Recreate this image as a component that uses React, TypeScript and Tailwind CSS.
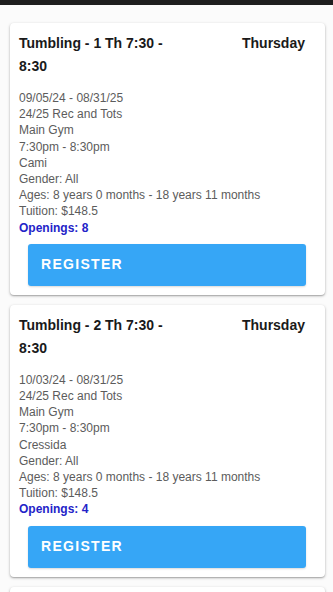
const classes = [
  {
    title: "Tumbling - 1 Th 7:30 - 8:30",
    day: "Thursday",
    dates: "09/05/24 - 08/31/25",
    season: "24/25 Rec and Tots",
    room: "Main Gym",
    time: "7:30pm - 8:30pm",
    coach: "Cami",
    gender: "All",
    ages: "8 years 0 months - 18 years 11 months",
    tuition: "$148.5",
    openings: 8,
  },
  {
    title: "Tumbling - 2 Th 7:30 - 8:30",
    day: "Thursday",
    dates: "10/03/24 - 08/31/25",
    season: "24/25 Rec and Tots",
    room: "Main Gym",
    time: "7:30pm - 8:30pm",
    coach: "Cressida",
    gender: "All",
    ages: "8 years 0 months - 18 years 11 months",
    tuition: "$148.5",
    openings: 4,
  },
  {
    title: "Tumbling - 3 Th 7:30 - 8:30",
    day: "Thursday",
    dates: "10/03/24 - 08/31/25",
    season: "24/25 Rec and Tots",
    room: "Main Gym",
    time: "7:30pm - 8:30pm",
    coach: "Cressida",
    gender: "All",
    ages: "8 years 0 months - 18 years 11 months",
    tuition: "$148.5",
    openings: 6,
  },
]

type ClassItem = (typeof classes)[number]

function ClassCard({ c }: { c: ClassItem }) {
  return (
    <div className="rounded-[4px] bg-white px-[9px] pt-[9px] pb-[9px] shadow-[0_1px_3px_rgba(0,0,0,0.28),0_1px_1px_rgba(0,0,0,0.14)]">
      <div className="flex items-start justify-between pr-[11px]">
        <div className="w-[162px] text-[14px] font-bold leading-[23px] text-[#1a1a1a]">{c.title}</div>
        <div className="text-[14px] font-bold leading-[23px] text-[#1a1a1a]">{c.day}</div>
      </div>
      <div className="mt-[12px] text-[12px] leading-[16.2px] text-[#5c5c5c]">
        <div>{c.dates}</div>
        <div>{c.season}</div>
        <div>{c.room}</div>
        <div>{c.time}</div>
        <div>{c.coach}</div>
        <div>Gender: {c.gender}</div>
        <div>Ages: {c.ages}</div>
        <div>Tuition: {c.tuition}</div>
        <div className="font-bold text-[#2323c8]">Openings: {c.openings}</div>
      </div>
      <div className="mt-[8px] pl-[9px] pr-[10px]">
        <button className="flex h-[42px] w-full items-center rounded-[3px] bg-[#36a6f6] pl-[13px] text-[14px] font-bold tracking-[1.3px] text-white shadow-[0_1px_2px_rgba(0,0,0,0.15)]">
          REGISTER
        </button>
      </div>
    </div>
  )
}

export default function App() {
  return (
    <div className="h-[592px] overflow-hidden bg-[#fbfbfb]" style={{ fontFamily: '"Liberation Sans", Arial, sans-serif' }}>
      <div className="h-[5px] bg-[#1e1e1e]" />
      <div className="flex flex-col gap-[10px] pl-[10px] pr-[8px] pt-[18px]">
        {classes.map((c) => (
          <ClassCard key={c.title} c={c} />
        ))}
      </div>
    </div>
  )
}
